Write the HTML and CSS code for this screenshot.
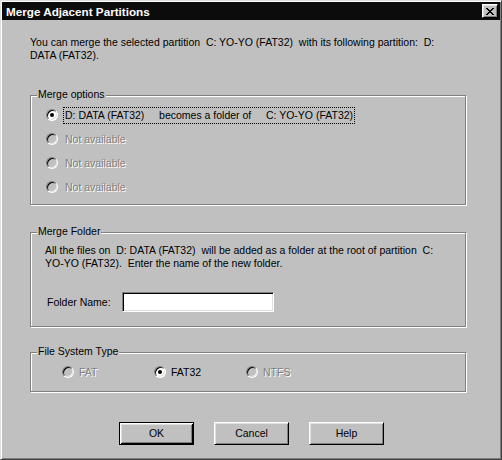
FILE: index.html
```html
<!DOCTYPE html>
<html>
<head>
<meta charset="utf-8">
<link rel="stylesheet" href="styles.css">
</head>
<body>
<div class="window">
  <div class="titlebar">
    <span class="title">Merge Adjacent Partitions</span>
    <span class="close">
      <svg width="8" height="7" viewBox="0 0 8 7"><path d="M0 0h2v1h1v1h2V1h1V0h2v1H7v1H6v1H5v1h1v1h1v1h1v1H6V6H5V5H3v1H2v1H0V6h1V5h1V4h1V3H2V2H1V1H0z" fill="#000"/></svg>
    </span>
  </div>
  <div class="content">
    <p class="intro">You can merge the selected partition&nbsp; C: YO-YO (FAT32)&nbsp; with its following partition:&nbsp; D:<br>DATA (FAT32).</p>

    <div class="group options">
      <span class="legend">Merge options</span>
      <div class="row">
        <span class="radio checked"></span>
        <span class="label focus"><span>D: DATA (FAT32)</span><span class="sep">becomes a folder of</span><span class="sep">C: YO-YO (FAT32)</span></span>
      </div>
      <div class="row">
        <span class="radio disabled"></span>
        <span class="label dim">Not available</span>
      </div>
      <div class="row">
        <span class="radio disabled"></span>
        <span class="label dim">Not available</span>
      </div>
      <div class="row">
        <span class="radio disabled"></span>
        <span class="label dim">Not available</span>
      </div>
    </div>

    <div class="group folder">
      <span class="legend">Merge Folder</span>
      <p class="desc">All the files on&nbsp; D: DATA (FAT32)&nbsp; will be added as a folder at the root of partition&nbsp; C:<br>YO-YO (FAT32).&nbsp; Enter the name of the new folder.</p>
      <div class="field">
        <span class="field-label">Folder Name:</span>
        <span class="input"></span>
      </div>
    </div>

    <div class="group fst">
      <span class="legend">File System Type</span>
      <div class="fs-row">
        <div class="fs-opt"><span class="radio disabled"></span><span class="label dim">FAT</span></div>
        <div class="fs-opt"><span class="radio checked"></span><span class="label">FAT32</span></div>
        <div class="fs-opt"><span class="radio disabled"></span><span class="label dim">NTFS</span></div>
      </div>
    </div>

    <div class="buttons">
      <span class="btn default">OK</span>
      <span class="btn">Cancel</span>
      <span class="btn">Help</span>
    </div>
  </div>
</div>
</body>
</html>
```
FILE: styles.css
```css
html, body {
  margin: 0;
  padding: 0;
  background: #c0c0c0;
}

.window {
  width: 502px;
  height: 460px;
  box-sizing: border-box;
  background: #c0c0c0;
  border-top: 1px solid #dfdfdf;
  border-left: 1px solid #dfdfdf;
  border-right: 1px solid #404040;
  border-bottom: 1px solid #404040;
  box-shadow: inset 1px 1px 0 #fff, inset -1px -1px 0 #808080;
  padding: 1px;
  display: flex;
  flex-direction: column;
  font-family: "Liberation Sans", Arial, sans-serif;
  font-size: 10.5px;
  line-height: 13px;
  color: #000;
}

.titlebar {
  height: 18px;
  background: #0c0c0c;
  display: flex;
  align-items: center;
  justify-content: space-between;
  padding: 0 2px 0 4px;
}

.title {
  color: #fff;
  font-weight: bold;
  font-size: 11.7px;
}

.close {
  width: 16px;
  height: 14px;
  box-sizing: border-box;
  background: #c0c0c0;
  border: 1px solid;
  border-color: #fff #000 #000 #fff;
  box-shadow: inset 1px 1px 0 #dfdfdf, inset -1px -1px 0 #808080;
  display: flex;
  align-items: center;
  justify-content: center;
}

.close svg { display: block; }

.content {
  padding-left: 28px;
  display: flex;
  flex-direction: column;
}

.intro {
  margin: 16px 0 0 0;
  white-space: nowrap;
}

.group {
  position: relative;
  width: 436px;
  box-sizing: border-box;
  border: 1px solid #808080;
  box-shadow: inset 1px 1px 0 #fff, 1px 1px 0 #fff;
}

.legend {
  position: absolute;
  left: 6px;
  top: -8px;
  padding: 0 1px;
  background: #c0c0c0;
}

.options {
  margin-top: 33px;
  height: 110px;
  padding: 11px 0 0 15px;
  display: flex;
  flex-direction: column;
  gap: 8px;
}

.row {
  display: flex;
  align-items: center;
  height: 16px;
}

.radio {
  width: 12px;
  height: 12px;
  box-sizing: border-box;
  border-radius: 50%;
  border: 1px solid;
  border-color: #808080 #fff #fff #808080;
  background: #fff;
  box-shadow: inset 1px 1px 0 #000, inset -1px -1px 0 #dfdfdf;
  display: flex;
  align-items: center;
  justify-content: center;
  flex: none;
}

.radio.checked::after {
  content: "";
  width: 4px;
  height: 4px;
  border-radius: 50%;
  background: #000;
}

.radio.disabled {
  background: #c0c0c0;
}

.label {
  margin-left: 5px;
  padding: 1px 1px;
  border: 1px solid transparent;
  white-space: nowrap;
}

.label.focus {
  border: 1px dotted #000;
}

.sep {
  margin-left: 14.7px;
}

.dim {
  color: #808080;
  text-shadow: 1px 1px 0 #fff;
}

.folder {
  margin-top: 27px;
  height: 95px;
  padding: 11px 0 0 14px;
}

.desc {
  margin: 0;
  white-space: nowrap;
}

.field {
  display: flex;
  align-items: center;
  margin-top: 22px;
  padding-left: 2px;
}

.field-label {
  width: 75px;
}

.input {
  width: 152px;
  height: 20px;
  box-sizing: border-box;
  background: #fff;
  border: 1px solid;
  border-color: #808080 #fff #fff #808080;
  box-shadow: inset 1px 1px 0 #000, inset -1px -1px 0 #dfdfdf;
}

.fst {
  margin-top: 25px;
  height: 40px;
  padding: 11px 0 0 31px;
}

.fs-row {
  display: grid;
  grid-template-columns: 92px 92px 92px;
}

.fs-opt {
  display: flex;
  align-items: center;
  height: 16px;
}

.fs-opt .label {
  margin-left: 3px;
}

.buttons {
  margin-top: 30px;
  padding-left: 89px;
  display: flex;
  gap: 20px;
}

.btn {
  width: 75px;
  height: 23px;
  box-sizing: border-box;
  background: #c0c0c0;
  border: 1px solid;
  border-color: #fff #000 #000 #fff;
  box-shadow: inset 1px 1px 0 #dfdfdf, inset -1px -1px 0 #808080;
  display: flex;
  align-items: center;
  justify-content: center;
}

.btn.default {
  border: 1px solid #000;
  box-shadow: inset 1px 1px 0 #fff, inset -1px -1px 0 #000, inset 2px 2px 0 #dfdfdf, inset -2px -2px 0 #808080;
}
```
